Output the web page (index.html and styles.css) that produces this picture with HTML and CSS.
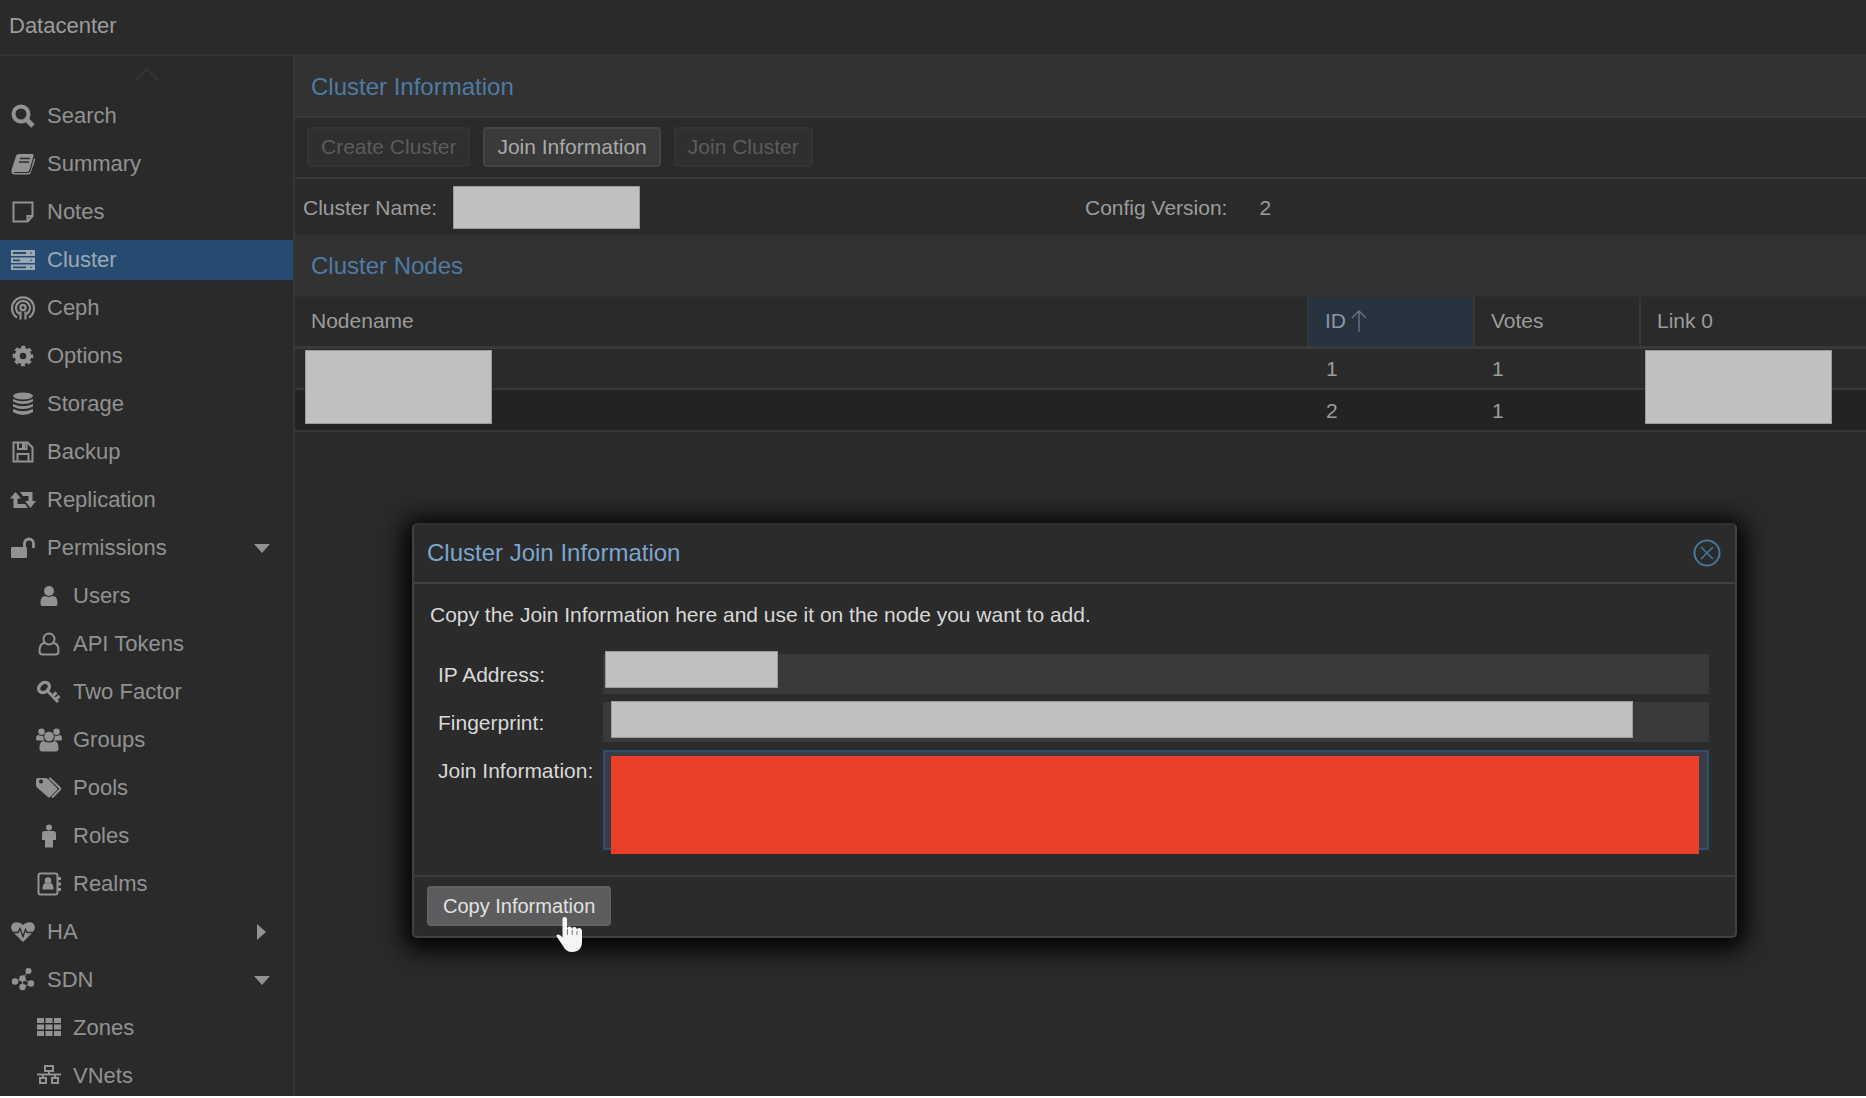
FILE: index.html
```html
<!DOCTYPE html>
<html lang="en">
<head>
<meta charset="utf-8">
<title>Datacenter</title>
<link rel="stylesheet" href="styles.css">
</head>
<body>
<div class="app">
  <header class="topbar">Datacenter</header>
  <div class="workspace">
    <nav class="sidebar">
      <button class="scroll-up" aria-label="Scroll up"><svg width="26" height="14" viewBox="0 0 26 14"><path d="M1 13 13 1l12 12" fill="none" stroke="currentColor" stroke-width="2"/></svg></button>
      <ul class="menu">
        <li><a href="#" class="item"><svg class="icon" viewBox="0 0 24 24"><circle cx="10" cy="10" r="7.500" fill="none" stroke="currentColor" stroke-width="4"/><path d="m15 15 7 7" stroke="currentColor" stroke-width="5"/></svg>Search</a></li>
        <li><a href="#" class="item"><svg class="icon" viewBox="0 0 24 24"><path d="M8 2h13q2 0 1.500 2l-4 14q-.5 2-2.500 2H4q-1.500 0-1 1h14q2 0 2.500-2L23 6q1.500 1 1 2.500L20 20q-.6 2.500-3 2.500H3.500Q0 22.500 .5 18L5 4q.7-2 3-2z" fill="currentColor"/><path d="M9 6.500h10M8 10h10" stroke="#2b2b2b" stroke-width="1.500"/></svg>Summary</a></li>
        <li><a href="#" class="item"><svg class="icon" viewBox="0 0 24 24" fill="none" stroke="currentColor" stroke-width="2"><path d="M2.500 2.500h19v13.500l-5 5.500h-14zM21.500 16h-5v5.500"/></svg>Notes</a></li>
        <li><a href="#" class="item active"><svg class="icon" viewBox="0 0 24 24"><path d="M0 2h24v6H0zM0 9.500h24v5.500H0zM0 16.500h24v5.500H0z" fill="currentColor"/><path d="M2 5h13M2 12.300h7M2 19.300h13" stroke="#264b70" stroke-width="1.800"/><path d="M19 5h2M19 12.300h2M19 19.300h2" stroke="#264b70" stroke-width="1"/></svg>Cluster</a></li>
        <li><a href="#" class="item"><svg class="icon" viewBox="0 0 24 24" fill="none" stroke="currentColor" stroke-width="2.200"><path d="M6 21.500a11 11 0 1 1 12 0M8.500 18a7 7 0 1 1 7 0"/><circle cx="12" cy="11.500" r="2.600"/><path d="M9.500 15.500v8M14.500 15.500v8"/></svg>Ceph</a></li>
        <li><a href="#" class="item"><svg class="icon" viewBox="0 0 24 24"><circle cx="12" cy="12" r="5.800" fill="none" stroke="currentColor" stroke-width="5"/><circle cx="12" cy="12" r="8.900" fill="none" stroke="currentColor" stroke-width="2.800" stroke-dasharray="4 2.990" stroke-dashoffset="2"/></svg>Options</a></li>
        <li><a href="#" class="item"><svg class="icon" viewBox="0 0 24 24" fill="currentColor"><ellipse cx="12" cy="4" rx="10" ry="3.500"/><path d="M2 7q10 4.500 20 0v2.500q-10 5-20 0zM2 12q10 4.500 20 0v2.500q-10 5-20 0zM2 17q10 4.500 20 0v3q-10 6-20 0z"/></svg>Storage</a></li>
        <li><a href="#" class="item"><svg class="icon" viewBox="0 0 24 24" fill="none" stroke="currentColor" stroke-width="2"><path d="M2.500 2.500h14l5 5v14h-19zM6.500 21.500V14h11v7.500M7 2.500V9h8.500V2.500"/><path d="M12.500 3v5" stroke-width="3"/></svg>Backup</a></li>
        <li><a href="#" class="item"><svg class="icon wide" viewBox="0 0 26 24" fill="currentColor"><path d="m5.500 4 5.500 6.500H7.500V16H15l3 4H3.500v-9.500H0zM10 4h12.500v9H26l-5.500 7-5.500-7h3.500V8H13z"/></svg>Replication</a></li>
        <li><a href="#" class="item"><svg class="icon" viewBox="0 0 24 24"><rect x="0" y="11" width="16" height="11" rx="1.200" fill="currentColor"/><path d="M13.500 12V7.500a4.500 4.500 0 0 1 9 0V12" fill="none" stroke="currentColor" stroke-width="2.800"/></svg>Permissions<svg class="caret" width="16" height="16" viewBox="0 0 16 16"><path d="M0 4h16l-8 9z" fill="currentColor"/></svg></a>
          <ul class="submenu">
            <li><a href="#" class="item"><svg class="icon" viewBox="0 0 24 24" fill="currentColor"><circle cx="12" cy="7" r="5"/><path d="M3.500 20c0-5 1-8 5-8q3.500 2 7 0c4 0 5 3 5 8q0 2-2 2h-13q-2 0-2-2z"/></svg>Users</a></li>
            <li><a href="#" class="item"><svg class="icon" viewBox="0 0 24 24" fill="none" stroke="currentColor" stroke-width="2"><circle cx="12" cy="7" r="5.500"/><path d="M8 11c-4 0-5.500 4-5.500 8q0 3.500 3 3.500h13q3 0 3-3.500c0-4-1.500-8-5.500-8"/></svg>API Tokens</a></li>
            <li><a href="#" class="item"><svg class="icon" viewBox="0 0 24 24" fill="none" stroke="currentColor"><ellipse cx="7" cy="7.500" rx="5.800" ry="4.500" transform="rotate(-40 7 7.500)" stroke-width="3.400"/><path d="m10.500 11 10.500 11M15.500 16l4-3.500M18.500 19.500l4-3.500" stroke-width="3"/></svg>Two Factor</a></li>
            <li><a href="#" class="item"><svg class="icon wide" viewBox="0 0 26 24" fill="currentColor"><circle cx="5.500" cy="3.800" r="3.300"/><circle cx="20.500" cy="3.800" r="3.300"/><circle cx="13" cy="8.500" r="4.800"/><path d="M0 11q0-4 2.500-4 2.500 1.500 4.800.6-.5 3 1.200 5H2q-2 0-2-1.600zM26 11q0-4-2.500-4-2.500 1.500-4.800.6.500 3-1.200 5H24q2 0 2-1.600zM3.500 20.500c0-4 1-7 4-7.500q5.500 3 11 0c3 .5 4 3.500 4 7.500q0 3-2.500 3H6q-2.500 0-2.500-3z"/></svg>Groups</a></li>
            <li><a href="#" class="item"><svg class="icon wide" viewBox="0 0 26 24"><path fill="currentColor" fill-rule="evenodd" d="M0 4q0-2 2-2h7q2 0 3 1l9 9q1 1 0 2l-7 7q-1 1-2 0L1.500 12Q0 11 0 9zm3 1.500a2 2 0 1 0 4 0 2 2 0 1 0-4 0z"/><path d="M13 2.500h1l9.500 9q1.500 1.300 0 2.500L16 21.500" fill="none" stroke="currentColor" stroke-width="2"/></svg>Pools</a></li>
            <li><a href="#" class="item"><svg class="icon" viewBox="0 0 24 24" fill="currentColor"><circle cx="12" cy="3.500" r="3"/><path d="M8 7h8q3 0 3 3v6h-3v7.500h-8V16H5v-6q0-3 3-3z"/></svg>Roles</a></li>
            <li><a href="#" class="item"><svg class="icon" viewBox="0 0 24 24"><rect x="1.500" y="1.500" width="19" height="21" rx="2" fill="none" stroke="currentColor" stroke-width="2"/><g fill="currentColor"><circle cx="11" cy="8.500" r="3.300"/><path d="M5.500 17.500q0-6.500 3-6.500 2.500 1 5 0 3 0 3 6.500zM21 5h3v3h-3zM21 10.500h3v3h-3zM21 16h3v3h-3z"/></g></svg>Realms</a></li>
          </ul>
        </li>
        <li><a href="#" class="item"><svg class="icon" viewBox="0 0 24 24"><path d="M12 22 2 12C-4 4 6-1 12 5c6-6 16-1 10 7z" fill="currentColor"/><path d="M0 12.500h7l2-4 3 8 2.500-7 1.500 3h8" fill="none" stroke="#2a2a2a" stroke-width="1.400"/></svg>HA<svg class="caret" width="16" height="16" viewBox="0 0 16 16"><path d="M3 0v16l9-8z" fill="currentColor"/></svg></a></li>
        <li><a href="#" class="item"><svg class="icon" viewBox="0 0 24 24" fill="currentColor"><circle cx="4" cy="13.500" r="3.200"/><circle cx="11.500" cy="10.500" r="3.200"/><circle cx="17.500" cy="3" r="3"/><circle cx="11.500" cy="19" r="3.200"/><circle cx="20" cy="15.500" r="3.200"/><path d="m4 13.500 7.500-3 6-7.500M11.500 10.500V19M11.500 10.500l8.500 5-8.500 3.500" fill="none" stroke="currentColor"/></svg>SDN<svg class="caret" width="16" height="16" viewBox="0 0 16 16"><path d="M0 4h16l-8 9z" fill="currentColor"/></svg></a>
          <ul class="submenu">
            <li><a href="#" class="item"><svg class="icon" viewBox="0 0 24 24" fill="currentColor"><path d="M0 2h7v5H0zM8.500 2h7v5h-7zM17 2h7v5h-7zM0 8.500h7v5H0zM8.500 8.500h7v5h-7zM17 8.500h7v5h-7zM0 15h7v5H0zM8.500 15h7v5h-7zM17 15h7v5h-7z"/></svg>Zones</a></li>
            <li><a href="#" class="item"><svg class="icon" viewBox="0 0 24 24" fill="none" stroke="currentColor" stroke-width="2"><path d="M8 2h8v5H8zM3 14h6v5H3zM15 14h6v5h-6zM12 7v3M0 10.500h24M6 10v4M18 10v4"/></svg>VNets</a></li>
          </ul>
        </li>
      </ul>
    </nav>
    <main class="content">
      <section>
        <h2 class="panel-title">Cluster Information</h2>
        <div class="toolbar">
          <button class="btn" disabled>Create Cluster</button>
          <button class="btn">Join Information</button>
          <button class="btn" disabled>Join Cluster</button>
        </div>
        <dl class="facts">
          <div class="fact"><dt>Cluster Name:</dt><dd><span class="mask mask-name"></span></dd></div>
          <div class="fact"><dt>Config Version:</dt><dd class="version">2</dd></div>
        </dl>
      </section>
      <section>
        <h2 class="panel-title nodes-title">Cluster Nodes</h2>
        <table class="nodes">
          <colgroup><col><col class="col-num"><col class="col-num"><col class="col-link"></colgroup>
          <thead>
            <tr><th>Nodename</th><th class="sorted">ID <svg width="16" height="24" viewBox="0 0 16 24"><path d="M8 23V2M1 9l7-7 7 7" fill="none" stroke="currentColor" stroke-width="1.500"/></svg></th><th>Votes</th><th>Link 0</th></tr>
          </thead>
          <tbody>
            <tr><td class="masked"><span class="mask mask-cell"></span></td><td>1</td><td>1</td><td class="masked"><span class="mask mask-cell mask-link"></span></td></tr>
            <tr><td></td><td>2</td><td>1</td><td></td></tr>
          </tbody>
        </table>
      </section>
    </main>
  </div>

  <div class="dialog" role="dialog" aria-labelledby="dialog-title">
    <header class="dialog-head">
      <h2 id="dialog-title">Cluster Join Information</h2>
      <button class="close" aria-label="Close"><svg width="28" height="28" viewBox="0 0 28 28" fill="none" stroke="currentColor" stroke-width="2"><circle cx="14" cy="14" r="12.500"/><path d="m8 8 12 12M20 8 8 20" stroke-width="1.500"/></svg></button>
    </header>
    <div class="dialog-body">
      <p>Copy the Join Information here and use it on the node you want to add.</p>
      <div class="form">
        <label for="ip">IP Address:</label>
        <div class="field"><input id="ip" type="text" readonly><span class="mask mask-ip"></span></div>
        <label for="fp">Fingerprint:</label>
        <div class="field"><input id="fp" type="text" readonly><span class="mask mask-fp"></span></div>
        <label for="join">Join Information:</label>
        <div class="field"><textarea id="join" readonly></textarea><span class="mask mask-join"></span></div>
      </div>
    </div>
    <footer class="dialog-foot">
      <button class="btn hover">Copy Information
        <svg class="pointer" width="28" height="38" viewBox="0 0 28 38"><path d="M9.500 2q2.500 0 2.500 3v9q0-3 2.500-2.500 2.500 0 2.500 3 0-3 2.500-2.500 2.500.3 2.500 3.300 0-2.300 2-2.200 3 .4 3 3.400V26q0 11-10 11-6 0-9-6L2 22q-1.500-2.500 1-2.500 2 0 4.500 3V5q0-3 2-3z" fill="#f5f5f5"/><path d="M12.500 14v6M17.200 15v5M22 16v4" stroke="#77777a" stroke-width="1"/></svg>
      </button>
    </footer>
  </div>
</div>
</body>
</html>
```
FILE: styles.css
```css
* { box-sizing: border-box; }

body {
  margin: 0;
  background: #2a2a2a;
  color: #9c9c9c;
  font: 21px/24px "Liberation Sans", Arial, sans-serif;
}

h2, p, ul, dl, dd { margin: 0; padding: 0; }
ul { list-style: none; }
button, input, textarea { font: inherit; color: inherit; }

.app {
  position: relative;
  display: flex;
  flex-direction: column;
  height: 100vh;
  overflow: hidden;
  border-bottom: 2px solid #fff;
}

.topbar {
  padding: 14px 9px 16px;
  border-bottom: 2px solid #343434;
  font-size: 22px;
}

.workspace { display: flex; flex: 1; min-height: 0; }

/* Navigation */
.sidebar {
  flex: none;
  width: 295px;
  border-right: 2px solid #353535;
  overflow: hidden;
  font-size: 22px;
}
.scroll-up {
  display: flex;
  justify-content: center;
  width: 100%;
  height: 40px;
  padding: 12px 0 0;
  border: 0;
  background: none;
  color: #353535;
}
.menu, .submenu { display: flex; flex-direction: column; gap: 8px; }
.submenu { padding-top: 8px; }
.item {
  display: flex;
  align-items: center;
  height: 40px;
  padding: 0 23px 0 11px;
  color: #929292;
  text-decoration: none;
}
.submenu .item { padding-left: 37px; }
.icon { flex: none; width: 24px; height: 24px; margin-right: 12px; }
.icon.wide { width: 26px; margin: 0 11px 0 -1px; }
.caret { margin-left: auto; }
.item.active { background: #264b70; color: #9ba7b3; }

/* Cluster panels */
.content { flex: 1; min-width: 0; }
.panel-title {
  padding: 19px 16px 17px;
  border-bottom: 2px solid #383838;
  background: #323232;
  color: #4f7ba3;
  font-size: 24px;
  font-weight: 400;
}
.nodes-title { border-bottom-color: #2f2f2f; }
.toolbar {
  display: flex;
  gap: 13px;
  padding: 9px 12px 10px;
  border-bottom: 2px solid #383838;
}
.btn {
  position: relative;
  height: 40px;
  padding: 0 12px;
  border: 2px solid #454545;
  border-radius: 4px;
  background: #3a3a3a;
  color: #a9a9a9;
  white-space: nowrap;
}
.btn:disabled { border-color: #343434; background: #2f2f2f; color: #5c5c5c; }

.facts {
  display: grid;
  grid-template-columns: 1fr 1fr;
  gap: 9px;
  padding: 7px 8px 6px;
}
.fact { display: flex; align-items: center; gap: 16px; }
.version { padding-left: 16px; }

.mask { display: block; border: 1px solid #9a9a9a; background: #c0c0c0; }
.mask-name { width: 187px; height: 43px; }

.nodes { width: 100%; border-collapse: collapse; table-layout: fixed; }
.col-num { width: 166px; }
.col-link { width: 226px; }
.nodes th, .nodes td { padding: 0 16px; text-align: left; font-weight: 400; }
.nodes th {
  height: 50px;
  border-left: 2px solid #363636;
  border-bottom: 3px solid #393939;
}
.nodes th:first-child { border-left: 0; }
.nodes th.sorted { background: #27333f; color: #8a98a4; }
.nodes th svg { margin-left: -1px; vertical-align: -5px; color: #66737e; }
.nodes td { height: 42px; padding: 2px 18px 0; border-bottom: 2px solid #363636; }
.nodes tbody tr:nth-child(even) { background: #232323; }
.masked { position: relative; }
.mask-cell { position: absolute; top: 1px; left: 10px; width: 187px; height: 74px; }
.mask-link { left: 5px; }

/* Join dialog */
.dialog {
  position: absolute;
  top: 523px;
  left: 50%;
  width: 71%;
  transform: translateX(-521px);
  border: 2px solid #414141;
  border-top-color: #303030;
  border-radius: 5px;
  background: #2b2b2b;
  color: #d8d8d8;
  box-shadow: 0 4px 24px 8px #000;
}
.dialog-head {
  display: flex;
  align-items: center;
  justify-content: space-between;
  padding: 14px 14px 15px 13px;
  border-bottom: 2px solid #414141;
}
.dialog-head h2 { color: #7ba6ce; font-size: 24px; font-weight: 400; line-height: 28px; }
.close { height: 28px; padding: 0; border: 0; background: none; color: #457899; line-height: 0; }
.dialog-body { padding: 19px 26px 25px 16px; }
.form {
  display: grid;
  grid-template-columns: 157px 1fr;
  gap: 8px;
  padding: 27px 0 0 8px;
}
.form label { padding-top: 9px; white-space: nowrap; }
.field { position: relative; display: flex; }
.field input, .field textarea { width: 100%; height: 40px; border: 0; padding: 8px; background: #3a3a3a; resize: none; }
.field textarea { height: 100px; border: 2px solid #2d506f; background: #3a3d47; }
.field .mask { position: absolute; }
.mask-ip { top: -3px; left: 2px; width: 173px; height: 37px; }
.mask-fp { top: -1px; left: 8px; right: 76px; height: 37px; }
.mask-join { top: 6px; left: 8px; right: 10px; height: 98px; border: 0; background: #e94027; }

.dialog-foot { padding: 9px 13px 10px; border-top: 2px solid #3c3c3c; }
.btn.hover { padding: 0 14px; border-color: #626262; background: #5c5c5e; color: #e2e2e2; font-size: 20px; }
.pointer { position: absolute; top: 27px; right: 26px; }
```
